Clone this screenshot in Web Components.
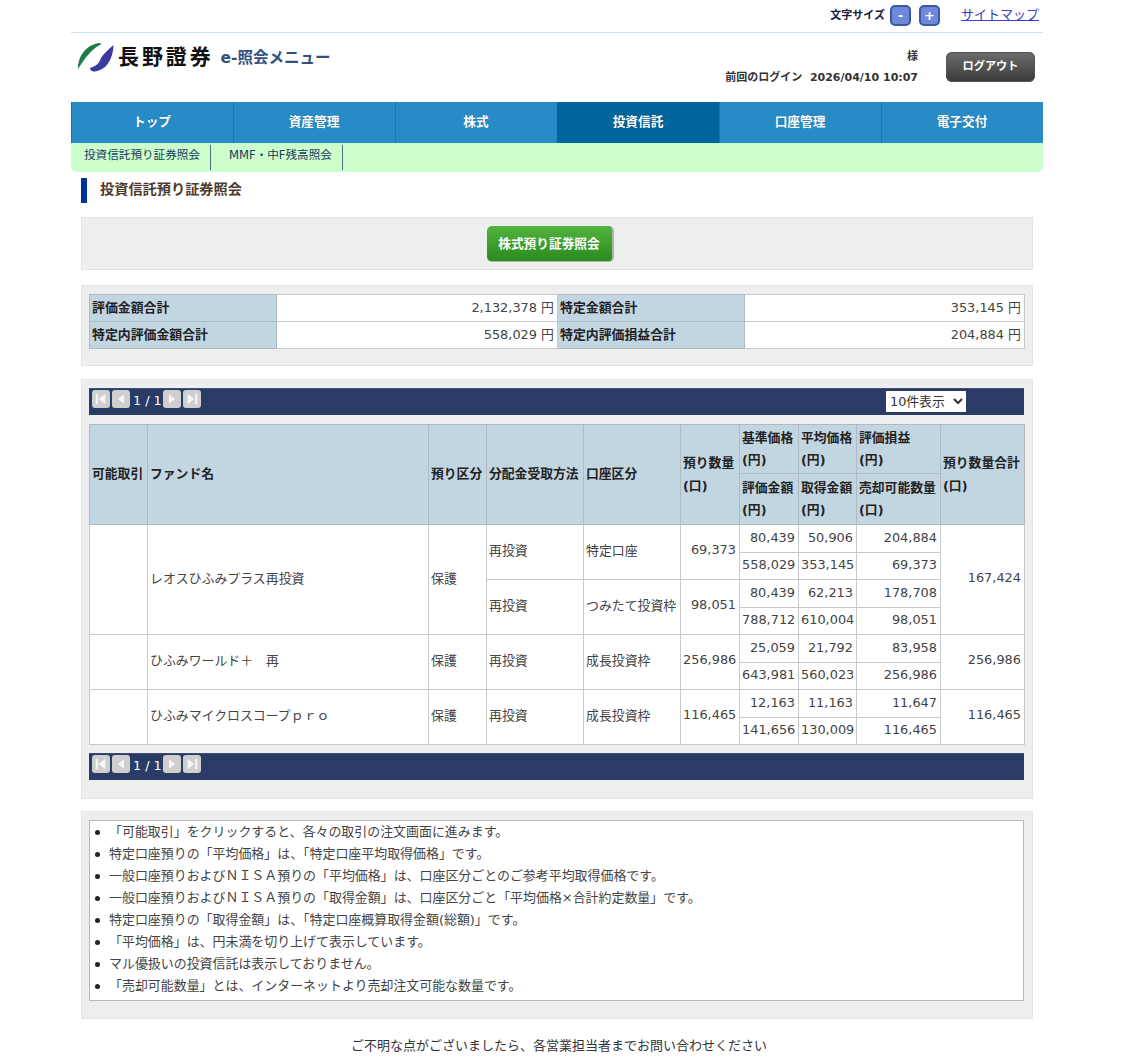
<!DOCTYPE html>
<html lang="ja"><head><meta charset="utf-8"><title>投資信託預り証券照会</title>
<style>
html,body{margin:0;padding:0;background:#fff}
body{font-family:"DejaVu Sans","Noto Sans CJK JP",sans-serif;font-size:12.8px;color:#333}
</style></head><body>
<nh-page>
<nh-topbar></nh-topbar>
<nh-header></nh-header>
<nh-nav></nh-nav>
<nh-subnav></nh-subnav>
<nh-title>投資信託預り証券照会</nh-title>
<nh-panel style="height:53px;margin-top:14px;padding:0 14px 0 0;display:flex;justify-content:center;align-items:center"><nh-green-button>株式預り証券照会</nh-green-button></nh-panel>
<nh-panel style="margin-top:15px;padding:8px 8px 16px 7px"><nh-summary></nh-summary></nh-panel>
<nh-panel style="margin-top:13px;padding:8px 8px 18px 7px">
  <nh-pager select></nh-pager>
  <nh-holdings style="margin:9px 0 8px"></nh-holdings>
  <nh-pager></nh-pager>
</nh-panel>
<nh-panel style="margin-top:12px;padding:8px 8px 17px 7px"><nh-notes></nh-notes></nh-panel>
<nh-foot>ご不明な点がございましたら、各営業担当者までお問い合わせください</nh-foot>
</nh-page>
<script>
const def=(name,css,html,setup)=>customElements.define(name,class extends HTMLElement{
  connectedCallback(){ if(this.shadowRoot)return;
    const r=this.attachShadow({mode:'open'});
    r.innerHTML=`<style>${css}</style>`+(typeof html==='function'?html(this):html);
    setup&&setup(r,this);}
});
const FONT='"DejaVu Sans","Noto Sans CJK JP",sans-serif';
def('nh-page',`:host{display:block;width:972px;margin-left:71px;font-family:${FONT}}`,`<slot></slot>`);

def('nh-topbar',`:host{display:flex;align-items:center;justify-content:flex-end;border-bottom:1px solid #cfe2f3;padding-bottom:4px;box-sizing:content-box;height:28px;padding-right:4px}
.l{font-size:11px;font-weight:700;color:#1a1a3a;margin-right:5px;margin-bottom:1px;margin-left:1px}
.b{width:21px;height:21px;box-sizing:border-box;border:2px solid #3a5a9e;border-radius:5px;background:#6d88dc;color:#fff;font-weight:700;font-size:13px;display:flex;align-items:center;justify-content:center;line-height:1;margin-top:3px}
.b+.b{margin-left:8px}
a{margin-left:21px;font-size:13px;color:#4040c4;text-decoration:underline;margin-bottom:2px}`,
`<span class="l">文字サイズ</span><span class="b">-</span><span class="b">+</span><a href="#">サイトマップ</a>`);

def('nh-header',`:host{display:flex;height:69px;justify-content:space-between;box-sizing:border-box;padding:5px 8px 0 3px}
.logo{display:flex;align-items:center;height:36px}
svg{width:48px;height:36px;margin-right:-4px;flex:none}
.n{font-size:21px;font-weight:700;letter-spacing:2.9px;color:#111;margin-right:7px;line-height:30px;white-space:nowrap;margin-top:2px}
.e{font-size:15.5px;font-weight:700;color:#34507e;white-space:nowrap}
.r{display:flex;align-items:flex-start}
.u{text-align:right;font-size:11px;font-weight:700;color:#333;line-height:20px;padding-top:9px;margin-right:28px}
.u div:last-child{margin-top:1px}
.out{margin-top:14px;width:89px;height:30px;border-radius:6px;background:linear-gradient(#6d6d6d,#3a3a3a);color:#fff;font-weight:700;font-size:11.2px;display:flex;align-items:center;justify-content:center;box-shadow:inset 0 0 0 1px #555;padding-bottom:4px;box-sizing:border-box}`,
`<div class="logo"><svg viewBox="0 0 48 36"><path d="M4 31C4 18 12 7 25 5L28 6C21 9 15 14 4 31Z" fill="#1d7a4a"/><path d="M39.5 7C39 22 32 32 21 33.5C18 34 16 32 16 30C22 28 25 26 27 20C30 15 35 11 39.5 7Z" fill="#3a3a9e"/></svg><span class="n">長野證券</span><span class="e">e-照会メニュー</span></div>
<div class="r"><div class="u"><div>様</div><div>前回のログイン&nbsp; 2026/04/10 10:07</div></div><div class="out">ログアウト</div></div>`);

def('nh-nav',`:host{display:grid;grid-template-columns:repeat(6,1fr);height:41px;background:#278bc8}
a{display:flex;align-items:center;justify-content:center;color:#fff;font-weight:700;font-size:12.7px;text-decoration:none;border-left:1px solid #1f74ad;box-sizing:border-box;text-shadow:0 0 1px rgba(0,0,0,.3);padding:0 1px 5px 0}
a:first-child{border-left:0}
a.on{background:#00659c;border-left-color:#00659c}`,
['トップ','資産管理','株式','投資信託','口座管理','電子交付'].map(t=>`<a href="#" class="${t==='投資信託'?'on':''}">${t}</a>`).join(''));

def('nh-subnav',`:host{display:flex;height:29px;background:#ccffcc;border-radius:0 0 6px 6px;align-items:flex-start;padding:2px 0 0 13px;box-sizing:border-box}
a{font-size:11.6px;color:#1a3a60;text-decoration:none;height:25px;line-height:21px;border-right:1px solid #4d7285;padding-right:10px;margin-right:18px;white-space:nowrap}`,
`<a href="#">投資信託預り証券照会</a><a href="#">MMF・中F残高照会</a>`);

def('nh-title',`:host{display:block;margin:6px 0 0 10px;height:25px;border-left:6px solid #003399;padding-left:13px;font-size:14.2px;font-weight:700;color:#4d3a2c;line-height:23px}`,`<slot></slot>`);

def('nh-panel',`:host{display:block;width:952px;margin-left:10px;box-sizing:border-box;background:#eee;border:1px solid #e4e4e4}`,`<slot></slot>`);

def('nh-green-button',`:host{display:flex;width:127px;height:36px;box-sizing:border-box;align-items:center;justify-content:center;border-radius:5px;background:linear-gradient(#52b33f,#2a8a1e);color:#fff;font-weight:700;font-size:12.7px;border-right:2px solid #a9b5a5;border-bottom:1px solid #a9b5a5;white-space:nowrap;padding-bottom:2px}`,`<slot></slot>`);

const TD=`border:1px solid #c6c9cc;font-size:12.9px;padding:0 3px 0 2px;box-sizing:border-box`;
def('nh-summary',`:host{display:block}
table{border-collapse:collapse;table-layout:fixed;width:935px;background:#fff;color:#444}
th,td{${TD};height:27px;white-space:nowrap;overflow:hidden;padding-bottom:3px}
th{background:#c2d6e2;text-align:left;color:#222;font-weight:700;font-size:12.9px;border-color:#b0bac2}
td{text-align:right}`,
`<table><colgroup><col style="width:187px"><col style="width:281px"><col style="width:187px"><col style="width:280px"></colgroup>
<tr><th>評価金額合計</th><td>2,132,378 円</td><th>特定金額合計</th><td>353,145 円</td></tr>
<tr><th>特定内評価金額合計</th><td>558,029 円</td><th>特定内評価損益合計</th><td>204,884 円</td></tr></table>`);

const arrow=(k)=>({
 first:'<path d="M2 2h2.4v12H2zM13 2v12L5.5 8z"/>',
 prev:'<path d="M11.5 2.5v11L4.5 8z"/>',
 next:'<path d="M4.5 2.5v11l7-5.5z"/>',
 last:'<path d="M11.6 2H14v12h-2.4zM3 2v12l7.5-6z"/>'}[k]);
def('nh-pager',`:host{display:flex;height:27px;background:#2a3b66;border-top:1px solid #3d4e78;box-sizing:border-box;align-items:flex-start;padding:1px 0 0 3px;position:relative;color:#fff;font-size:12.8px}
.b{width:18px;height:18px;border-radius:3px;background:#cfcfcf;margin-right:2px;display:flex;align-items:center;justify-content:center}
.b svg{width:14px;height:14px;fill:#f6f6f6}
.t{line-height:21px;margin:0 1px 0 1px;white-space:pre}
select{margin-left:auto;margin-right:58px;width:80px;height:21px;border:0;background:#fff;font:12.8px ${FONT};color:#333;padding:0;margin-top:1px}`,
(h)=>{const btn=k=>`<span class="b"><svg viewBox="0 0 16 16">${arrow(k)}</svg></span>`;
return btn('first')+btn('prev')+`<span class="t">1 / 1</span>`+btn('next')+btn('last')+(h.hasAttribute('select')?`<select><option>10件表示</option></select>`:'');});

const rows=[
 {name:'レオスひふみプラス再投資',total:'167,424',subs:[
  ['再投資','特定口座','69,373',['80,439','50,906','204,884'],['558,029','353,145','69,373']],
  ['再投資','つみたて投資枠','98,051',['80,439','62,213','178,708'],['788,712','610,004','98,051']]]},
 {name:'ひふみワールド＋　再',total:'256,986',subs:[
  ['再投資','成長投資枠','256,986',['25,059','21,792','83,958'],['643,981','560,023','256,986']]]},
 {name:'ひふみマイクロスコープｐｒｏ',total:'116,465',subs:[
  ['再投資','成長投資枠','116,465',['12,163','11,163','11,647'],['141,656','130,009','116,465']]]}];
def('nh-holdings',`:host{display:block}
table{border-collapse:collapse;table-layout:fixed;width:935px;background:#fff;color:#444}
th,td{${TD};white-space:nowrap;overflow:hidden;padding-bottom:2px}
td[rowspan]{padding-bottom:5px}
th{background:#c2d6e2;text-align:left;color:#222;font-weight:700;font-size:12.8px;border-color:#b0bac2;line-height:22.5px;padding:0 1px 0 2px}
thead tr.a{height:49px}
thead tr.b{height:51px}
tbody tr{height:27.5px}
.n{text-align:right}`,
()=>{
 let b='';
 rows.forEach(r=>{const span=r.subs.length*2;
  r.subs.forEach((s,i)=>{
   b+='<tr>';
   if(i===0)b+=`<td rowspan="${span}"></td><td rowspan="${span}">${r.name}</td><td rowspan="${span}">保護</td>`;
   b+=`<td rowspan="2">${s[0]}</td><td rowspan="2">${s[1]}</td><td rowspan="2" class="n">${s[2]}</td>`;
   b+=s[3].map(v=>`<td class="n">${v}</td>`).join('');
   if(i===0)b+=`<td rowspan="${span}" class="n">${r.total}</td>`;
   b+='</tr><tr>'+s[4].map(v=>`<td class="n">${v}</td>`).join('')+'</tr>';
  });});
 return `<table><colgroup>${[58,281,58,97,97,59,59,58,84,84].map(w=>`<col style="width:${w}px">`).join('')}</colgroup>
 <thead><tr class="a"><th rowspan="2">可能取引</th><th rowspan="2">ファンド名</th><th rowspan="2">預り区分</th><th rowspan="2">分配金受取方法</th><th rowspan="2">口座区分</th><th rowspan="2">預り数量<br>(口)</th>
 <th>基準価格<br>(円)</th><th>平均価格<br>(円)</th><th>評価損益<br>(円)</th><th rowspan="2">預り数量合計<br>(口)</th></tr>
 <tr class="b"><th>評価金額<br>(円)</th><th>取得金額<br>(円)</th><th>売却可能数量<br>(口)</th></tr></thead><tbody>${b}</tbody></table>`;});

def('nh-notes',`:host{display:block;width:935px;height:181px;box-sizing:border-box;background:#fff;border:1px solid #b8b8b8}
ul{margin:0;padding:0;list-style:none;font-size:12.95px;color:#444;line-height:22px}
li{white-space:nowrap;display:flex;align-items:center}
li::before{content:"";flex:none;width:5px;height:5px;border-radius:50%;background:#222;margin:0 9px 0 5px}`,
`<ul>${['「可能取引」をクリックすると、各々の取引の注文画面に進みます。','特定口座預りの「平均価格」は、「特定口座平均取得価格」です。','一般口座預りおよびＮＩＳＡ預りの「平均価格」は、口座区分ごとのご参考平均取得価格です。','一般口座預りおよびＮＩＳＡ預りの「取得金額」は、口座区分ごと「平均価格×合計約定数量」です。','特定口座預りの「取得金額」は、「特定口座概算取得金額(総額)」です。','「平均価格」は、円未満を切り上げて表示しています。','マル優扱いの投資信託は表示しておりません。','「売却可能数量」とは、インターネットより売却注文可能な数量です。'].map(t=>`<li>${t}</li>`).join('')}</ul>`);

def('nh-foot',`:host{display:block;text-align:center;font-size:13px;color:#333;margin-top:16px;line-height:22px;padding-left:4px;height:22px}`,`<slot></slot>`);
</script>
</body></html>
